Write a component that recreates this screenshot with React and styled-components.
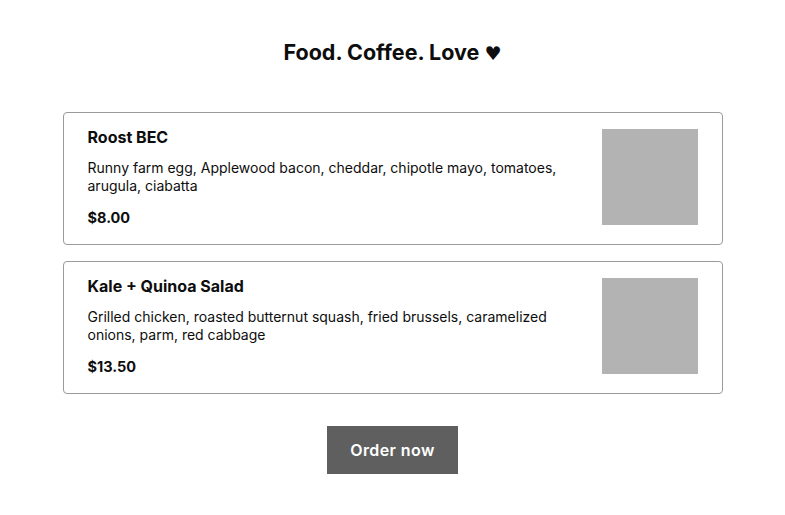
import React from "react";
import styled, { createGlobalStyle } from "styled-components";

const Global = createGlobalStyle`
  html, body { margin: 0; padding: 0; background: #fff; }
  body { font-family: Inter, Lato, sans-serif; color: #0d0d0d; }
`;

const Page = styled.main`
  width: 660px;
  margin: 0 auto;
  padding-top: 38px;
  display: flex;
  flex-direction: column;
  align-items: center;
`;

const Heading = styled.h1`
  margin: 0 0 45px;
  font-size: 21.5px;
  line-height: 28px;
  font-weight: 700;
`;

const Heart = styled.span`
  font-family: "DejaVu Sans", sans-serif;
  font-size: 19px;
  font-weight: 400;
`;

const List = styled.div`
  width: 100%;
  display: flex;
  flex-direction: column;
  gap: 16px;
`;

const Card = styled.article`
  display: flex;
  justify-content: space-between;
  align-items: flex-start;
  border: 1px solid #9a9a9a;
  border-radius: 4px;
  padding: 16px 24px 18px;
`;

const Info = styled.div`
  display: flex;
  flex-direction: column;
  width: 480px;
`;

const Name = styled.h2`
  margin: 0 0 14px;
  font-size: 16px;
  line-height: 16px;
  font-weight: 700;
`;

const Desc = styled.p`
  margin: 0 0 15px;
  font-size: 14px;
  line-height: 18px;
`;

const Price = styled.div`
  font-size: 14.5px;
  line-height: 16px;
  font-weight: 700;
`;

const Thumb = styled.div`
  width: 96px;
  height: 96px;
  background: #b3b3b3;
  flex-shrink: 0;
`;

const Button = styled.button`
  margin-top: 32px;
  width: 131px;
  height: 48px;
  border: none;
  background: #5f5f5f;
  color: #fff;
  font-family: inherit;
  font-size: 16px;
  font-weight: 600;
  letter-spacing: 0.4px;
  cursor: pointer;
`;

const items = [
  {
    name: "Roost BEC",
    desc: "Runny farm egg, Applewood bacon, cheddar, chipotle mayo, tomatoes, arugula, ciabatta",
    price: "$8.00",
  },
  {
    name: "Kale + Quinoa Salad",
    desc: "Grilled chicken, roasted butternut squash, fried brussels, caramelized onions, parm, red cabbage",
    price: "$13.50",
  },
];

export default function App() {
  return (
    <>
      <Global />
      <Page>
        <Heading>
          Food. Coffee. Love <Heart>♥</Heart>
        </Heading>
        <List>
          {items.map((it) => (
            <Card key={it.name}>
              <Info>
                <Name>{it.name}</Name>
                <Desc>{it.desc}</Desc>
                <Price>{it.price}</Price>
              </Info>
              <Thumb />
            </Card>
          ))}
        </List>
        <Button>Order now</Button>
      </Page>
    </>
  );
}
